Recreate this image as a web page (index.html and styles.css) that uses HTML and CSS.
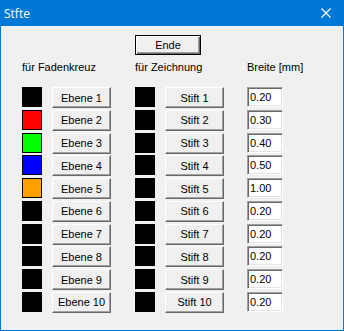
FILE: index.html
```html
<!DOCTYPE html>
<html lang="de">
<head>
    <meta charset="UTF-8">
    <title>Stfte</title>
    <link rel="stylesheet" href="styles.css">
</head>
<body>
    <div class="window">
        <div class="titlebar">
            <span class="title">Stfte</span>
            <svg class="close" width="10" height="10" viewBox="0 0 10 10">
                <path d="M0.5 0.5 L9.5 9.5 M9.5 0.5 L0.5 9.5" stroke="#fff" stroke-width="1.1" fill="none"/>
            </svg>
        </div>
        <div class="client">
            <button type="button" class="btn btn-default">Ende</button>
            <div class="pens">
                <div class="head head-cross">für Fadenkreuz</div>
                <div class="head head-draw">für Zeichnung</div>
                <div class="head head-width">Breite [mm]</div>

                <div class="swatch" style="background:#000"></div>
                <button type="button" class="btn">Ebene 1</button>
                <div class="swatch"></div>
                <button type="button" class="btn">Stift 1</button>
                <input class="width" type="text" value="0.20">

                <div class="swatch" style="background:#ff0000"></div>
                <button type="button" class="btn">Ebene 2</button>
                <div class="swatch"></div>
                <button type="button" class="btn">Stift 2</button>
                <input class="width" type="text" value="0.30">

                <div class="swatch" style="background:#00ff00"></div>
                <button type="button" class="btn">Ebene 3</button>
                <div class="swatch"></div>
                <button type="button" class="btn">Stift 3</button>
                <input class="width" type="text" value="0.40">

                <div class="swatch" style="background:#0000ff"></div>
                <button type="button" class="btn">Ebene 4</button>
                <div class="swatch"></div>
                <button type="button" class="btn">Stift 4</button>
                <input class="width" type="text" value="0.50">

                <div class="swatch" style="background:#ffa000"></div>
                <button type="button" class="btn">Ebene 5</button>
                <div class="swatch"></div>
                <button type="button" class="btn">Stift 5</button>
                <input class="width" type="text" value="1.00">

                <div class="swatch"></div>
                <button type="button" class="btn">Ebene 6</button>
                <div class="swatch"></div>
                <button type="button" class="btn">Stift 6</button>
                <input class="width" type="text" value="0.20">

                <div class="swatch"></div>
                <button type="button" class="btn">Ebene 7</button>
                <div class="swatch"></div>
                <button type="button" class="btn">Stift 7</button>
                <input class="width" type="text" value="0.20">

                <div class="swatch"></div>
                <button type="button" class="btn">Ebene 8</button>
                <div class="swatch"></div>
                <button type="button" class="btn">Stift 8</button>
                <input class="width" type="text" value="0.20">

                <div class="swatch"></div>
                <button type="button" class="btn">Ebene 9</button>
                <div class="swatch"></div>
                <button type="button" class="btn">Stift 9</button>
                <input class="width" type="text" value="0.20">

                <div class="swatch"></div>
                <button type="button" class="btn">Ebene 10</button>
                <div class="swatch"></div>
                <button type="button" class="btn">Stift 10</button>
                <input class="width" type="text" value="0.20">
            </div>
        </div>
    </div>
</body>
</html>
```

FILE: styles.css
```css
body {
    margin: 0;
    font-family: "Liberation Sans", Arial, sans-serif;
    font-size: 11px;
    background-color: #f0f0f0;
}
.window {
    width: 344px;
    height: 331px;
    display: flex;
    flex-direction: column;
}
.titlebar {
    height: 26px;
    flex: none;
    background-color: #0078d7;
    display: flex;
    align-items: center;
    justify-content: space-between;
    padding: 0 13px 0 4px;
    box-sizing: border-box;
}
.title {
    color: #fff;
    font-family: "Open Sans", "Liberation Sans", sans-serif;
    font-size: 12px;
}
.close {
    display: block;
}
.client {
    flex: 1;
    background-color: #f0f0f0;
    border: 1px solid #0078d7;
    border-top: none;
    padding: 9px 0 0 21px;
}
.btn {
    box-sizing: border-box;
    width: 59px;
    height: 21px;
    padding: 0;
    background-color: #f0f0f0;
    border: 1px solid;
    border-color: #fff #696969 #696969 #fff;
    box-shadow: inset -1px -1px #a0a0a0;
    font-family: "Liberation Sans", Arial, sans-serif;
    font-size: 11px;
    color: #000;
    white-space: pre;
}
.btn-default {
    display: block;
    width: 66px;
    height: 20px;
    margin-left: 113px;
    border: 1px solid #000;
    box-shadow: inset 1px 1px #fff, inset -1px -1px #696969, inset -2px -2px #a0a0a0;
}
.pens {
    display: grid;
    grid-template-columns: 30px 83px 30px 82px 36px;
    grid-auto-rows: 22.78px;
    grid-template-rows: 26px;
    margin-top: 6px;
}
.head {
    white-space: nowrap;
    line-height: 13px;
}
.head-cross {
    grid-column: 1 / 3;
}
.head-draw {
    grid-column: 3 / 5;
}
.head-width {
    grid-column: 5;
}
.swatch {
    box-sizing: border-box;
    width: 20px;
    height: 20px;
    border: 1px solid #000;
    background-color: #000;
}
.width {
    box-sizing: border-box;
    width: 36px;
    height: 20px;
    margin: 0;
    padding: 0 0 0 2px;
    border: 1px solid;
    border-color: #a0a0a0 #fff #fff #a0a0a0;
    box-shadow: inset 1px 1px #696969, inset -1px -1px #e3e3e3;
    background-color: #fff;
    font-family: "Liberation Sans", Arial, sans-serif;
    font-size: 11px;
    color: #000;
    outline: none;
}
```
